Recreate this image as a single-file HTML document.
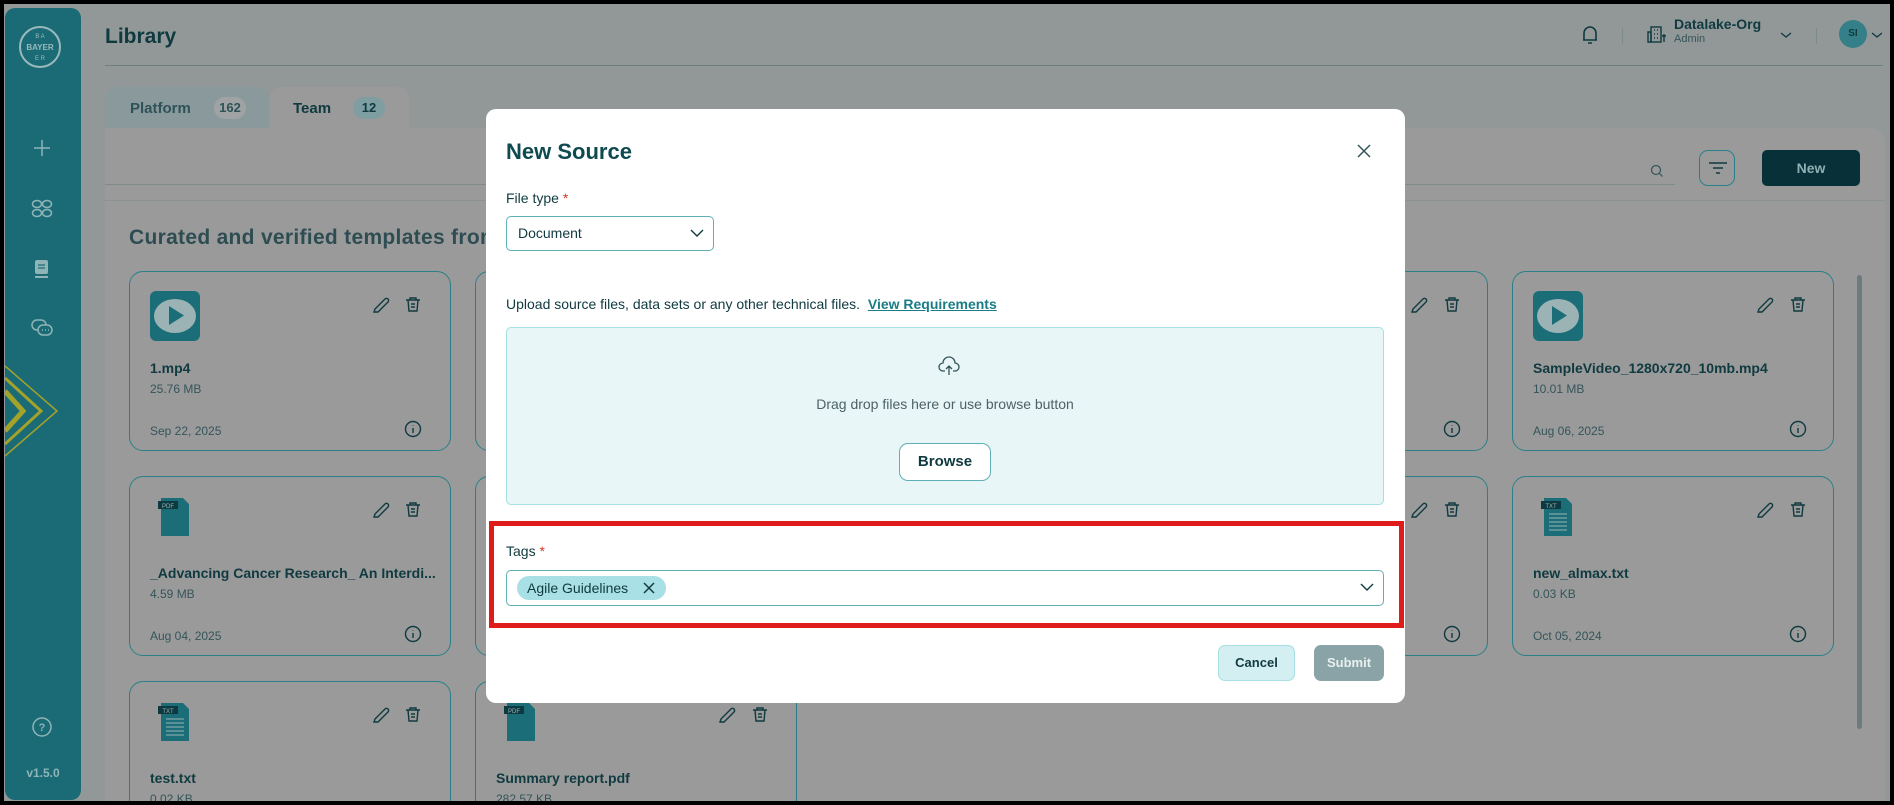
<!DOCTYPE html>
<html><head><meta charset="utf-8">
<style>
*{box-sizing:border-box;margin:0;padding:0}
body{width:1894px;height:805px;overflow:hidden;background:#000;font-family:"Liberation Sans",sans-serif;position:relative}
.scr{position:absolute;left:4px;top:4px;width:1886px;height:797px;background:#929898;overflow:hidden}
.abs{position:absolute}
.side{position:absolute;left:1px;top:4px;width:76px;height:792px;background:#1b6b76;border-radius:10px}
.panel{position:absolute;left:101px;top:124px;width:1780px;height:673px;background:#9a9a9a;border-radius:0 14px 0 0;overflow:hidden}
.card{position:absolute;width:322px;height:180px;border:1.5px solid #2a8088;border-radius:14px}
.nm{position:absolute;left:20px;top:88px;font-size:14px;font-weight:bold;color:#0f3a40;white-space:nowrap}
.sz{position:absolute;left:20px;top:110px;font-size:12px;color:#34555a}
.dt{position:absolute;left:20px;top:152px;font-size:12px;color:#34555a}
.t{color:#0f3a40}
.modal{position:absolute;left:482px;top:105px;width:919px;height:594px;background:#fff;border-radius:10px}
.mc{position:absolute;left:0;top:-4px;width:919px;height:594px}
</style></head><body>
<div class="scr">
<div class="side">
  <svg class="abs" style="left:12px;top:16px" width="46" height="46" viewBox="0 0 46 46"><circle cx="23" cy="23" r="20" fill="none" stroke="#9ab9bc" stroke-width="2"/><text x="23" y="26" font-size="8" fill="#9ab9bc" text-anchor="middle" font-family="Liberation Sans" font-weight="bold">BAYER</text><text x="23" y="14" font-size="6" fill="#9ab9bc" text-anchor="middle" font-family="Liberation Sans">B A</text><text x="23" y="36" font-size="6" fill="#9ab9bc" text-anchor="middle" font-family="Liberation Sans">E R</text></svg>
  <svg class="abs" style="left:27px;top:130px" width="20" height="20"><path d="M10 2v16M2 10h16" stroke="#8fb4b8" stroke-width="1.5"/></svg>
  <svg class="abs" style="left:26px;top:190px" width="22" height="22" fill="none" stroke="#8fb4b8" stroke-width="1.5"><ellipse cx="6" cy="6" rx="4.5" ry="3.5"/><ellipse cx="16" cy="6" rx="4.5" ry="3.5"/><ellipse cx="6" cy="15" rx="4.5" ry="3.5"/><ellipse cx="16" cy="15" rx="4.5" ry="3.5"/></svg>
  <svg class="abs" style="left:27px;top:250px" width="20" height="22"><rect x="3" y="2" width="13" height="14" rx="2" fill="#8fb4b8"/><path d="M6 7h7M6 10h7" stroke="#1b6b76" stroke-width="1.3"/><path d="M3 19h13" stroke="#8fb4b8" stroke-width="2"/></svg>
  <svg class="abs" style="left:25px;top:309px" width="24" height="22" fill="none" stroke="#8fb4b8" stroke-width="1.5"><rect x="2" y="3" width="14" height="10" rx="5"/><rect x="8" y="8" width="14" height="10" rx="5" fill="#1b6b76"/><path d="M12 13h1M15 13h1M18 13h1"/></svg>
  <svg class="abs" style="left:0;top:348px" width="60" height="110" fill="none" stroke="#a3a229"><path d="M0 10 L52 55 L0 100" stroke-width="1.5"/><path d="M0 22 L36 55 L0 88" stroke-width="3"/><path d="M0 35 L18 55 L0 75" stroke-width="5"/></svg>
  <svg class="abs" style="left:26px;top:708px" width="22" height="22" fill="none" stroke="#8fb4b8" stroke-width="1.5"><circle cx="11" cy="11" r="9"/><text x="11" y="15" font-size="11" fill="#8fb4b8" stroke="none" text-anchor="middle" font-family="Liberation Sans" font-weight="bold">?</text></svg>
  <div class="abs" style="left:0;width:76px;top:758px;text-align:center;font-size:12px;font-weight:bold;color:#8fb4b8">v1.5.0</div>
</div>

<div class="abs t" style="left:101px;top:21px;font-size:21px;font-weight:bold">Library</div>
<div class="abs" style="left:101px;top:61px;width:1778px;height:1px;background:#6f7f80"></div>
<svg class="abs" style="left:1576px;top:20px" width="20" height="22" fill="none" stroke="#0f3a40" stroke-width="1.6"><path d="M4 16V9a6 6 0 0 1 12 0v7H3h14M8 19h4"/></svg>
<div class="abs" style="left:1618px;top:24px;width:1px;height:16px;background:#7b8a8b"></div>
<svg class="abs" style="left:1642px;top:20px" width="22" height="20" fill="none" stroke="#0f3a40" stroke-width="1.4"><rect x="5" y="3" width="10" height="15"/><path d="M2 8h3v10H2zM8 6h1M11 6h1M8 10h1M11 10h1M8 14h1M11 14h1M18 10v8M16 12h4"/></svg>
<div class="abs t" style="left:1670px;top:12px;font-size:14px;font-weight:bold">Datalake-Org</div>
<div class="abs" style="left:1670px;top:29px;font-size:11px;color:#34555a">Admin</div>
<svg class="abs" style="left:1775px;top:26px" width="14" height="10"><path d="M2 3l5 4 5-4" stroke="#0f3a40" fill="none" stroke-width="1.3"/></svg>
<div class="abs" style="left:1812px;top:24px;width:1px;height:16px;background:#7b8a8b"></div>
<div class="abs" style="left:1835px;top:16px;width:28px;height:28px;border-radius:50%;background:#357f88;color:#0f3a40;font-size:10px;font-weight:bold;text-align:center;line-height:28px">SI</div>
<svg class="abs" style="left:1866px;top:26px" width="14" height="10"><path d="M2 3l5 4 5-4" stroke="#0f3a40" fill="none" stroke-width="1.3"/></svg>

<div class="abs" style="left:101px;top:83px;width:164px;height:42px;background:#8a9a9c;border-radius:12px 12px 0 0"></div>
<div class="abs" style="left:265px;top:83px;width:140px;height:42px;background:#9a9a9a;border-radius:12px 12px 0 0"></div>
<div class="abs" style="left:126px;top:96px;font-size:15px;font-weight:bold;color:#2e5258">Platform</div>
<div class="abs" style="left:210px;top:93px;width:32px;height:22px;border-radius:11px;background:#a0a3a4;font-size:13px;font-weight:bold;color:#2e5258;text-align:center;line-height:22px">162</div>
<div class="abs t" style="left:289px;top:96px;font-size:15px;font-weight:bold">Team</div>
<div class="abs" style="left:349px;top:93px;width:32px;height:22px;border-radius:11px;background:#7e9ea1;font-size:13px;font-weight:bold;color:#0f3a40;text-align:center;line-height:22px">12</div>

<div class="panel">
  <div class="abs" style="left:0;top:56px;width:1570px;height:1px;background:#7f8a8b"></div>
  <svg class="abs" style="left:1545px;top:36px" width="14" height="14" fill="none" stroke="#34555a" stroke-width="1.2"><circle cx="6" cy="6" r="4.5"/><path d="M9.5 9.5l3 3"/></svg>
  <div class="abs" style="left:1594px;top:22px;width:36px;height:36px;border:1.5px solid #2a8088;border-radius:9px"></div>
  <svg class="abs" style="left:1602px;top:32px" width="22" height="16" stroke="#0f3a40" stroke-width="1.4"><path d="M2 3h18M6 8h10M9 13h4"/></svg>
  <div class="abs" style="left:1657px;top:22px;width:98px;height:36px;background:#083038;border-radius:5px;color:#8fb0b3;font-size:14px;font-weight:bold;text-align:center;line-height:36px">New</div>
  <div class="abs" style="left:0;top:72px;width:1780px;height:1px;background:#8a9293"></div>
  <div class="abs" style="left:24px;top:98px;font-size:21px;font-weight:bold;color:#2e4d52;letter-spacing:.3px">Curated and verified templates from</div>
  <div class="abs" style="left:1752px;top:147px;width:5px;height:454px;background:#6b7b7e;border-radius:3px"></div>

  <div class="card" style="left:24px;top:143px">
    <svg class="abs" style="left:20px;top:19px" width="50" height="50"><rect width="50" height="50" rx="6" fill="#1b6e78"/><ellipse cx="25" cy="25" rx="21" ry="17" fill="#9bb3b5"/><path d="M19 15v19l15-9.5z" fill="#1b6e78"/></svg>
    <div class="nm">1.mp4</div><div class="sz">25.76 MB</div><div class="dt">Sep 22, 2025</div>
  </div>
  <div class="card" style="left:370px;top:143px"></div>
  <div class="card" style="left:1061px;top:143px"></div>
  <div class="card" style="left:1407px;top:143px">
    <svg class="abs" style="left:20px;top:19px" width="50" height="50"><rect width="50" height="50" rx="6" fill="#1b6e78"/><ellipse cx="25" cy="25" rx="21" ry="17" fill="#9bb3b5"/><path d="M19 15v19l15-9.5z" fill="#1b6e78"/></svg>
    <div class="nm">SampleVideo_1280x720_10mb.mp4</div><div class="sz">10.01 MB</div><div class="dt">Aug 06, 2025</div>
  </div>
  <div class="card" style="left:24px;top:348px">
    <svg class="abs" style="left:28px;top:19px" width="34" height="42"><path d="M3 2h22l6 6v32H3z" fill="#1b6e78"/><rect x="0" y="5" width="20" height="8" fill="#0d3a40"/><text x="10" y="12" font-size="6" fill="#9bb3b5" text-anchor="middle" font-family="Liberation Sans">PDF</text></svg>
    <div class="nm">_Advancing Cancer Research_ An Interdi...</div><div class="sz">4.59 MB</div><div class="dt">Aug 04, 2025</div>
  </div>
  <div class="card" style="left:370px;top:348px"></div>
  <div class="card" style="left:1061px;top:348px"></div>
  <div class="card" style="left:1407px;top:348px">
    <svg class="abs" style="left:28px;top:19px" width="34" height="42"><path d="M3 2h22l6 6v32H3z" fill="#1b6e78"/><rect x="0" y="5" width="20" height="8" fill="#0d3a40"/><text x="10" y="12" font-size="6" fill="#9bb3b5" text-anchor="middle" font-family="Liberation Sans">TXT</text><path d="M8 18h18M8 22h18M8 26h18M8 30h18M8 34h18" stroke="#9bb3b5" stroke-width="1"/></svg>
    <div class="nm">new_almax.txt</div><div class="sz">0.03 KB</div><div class="dt">Oct 05, 2024</div>
  </div>
  <div class="card" style="left:24px;top:553px">
    <svg class="abs" style="left:28px;top:19px" width="34" height="42"><path d="M3 2h22l6 6v32H3z" fill="#1b6e78"/><rect x="0" y="5" width="20" height="8" fill="#0d3a40"/><text x="10" y="12" font-size="6" fill="#9bb3b5" text-anchor="middle" font-family="Liberation Sans">TXT</text><path d="M8 18h18M8 22h18M8 26h18M8 30h18M8 34h18" stroke="#9bb3b5" stroke-width="1"/></svg>
    <div class="nm">test.txt</div><div class="sz">0.02 KB</div>
  </div>
  <div class="card" style="left:370px;top:553px">
    <svg class="abs" style="left:28px;top:19px" width="34" height="42"><path d="M3 2h22l6 6v32H3z" fill="#1b6e78"/><rect x="0" y="5" width="20" height="8" fill="#0d3a40"/><text x="10" y="12" font-size="6" fill="#9bb3b5" text-anchor="middle" font-family="Liberation Sans">PDF</text></svg>
    <div class="nm">Summary report.pdf</div><div class="sz">282.57 KB</div>
  </div>
</div>

<svg class="abs" style="left:0;top:0" width="1886" height="797">
  <defs>
    <g id="ed"><path d="M-6 5 L4 -5 a2 2 0 0 1 3 3 L-3 8 L-7 8 Z" fill="none" stroke="#0f3a40" stroke-width="1.4"/></g>
    <g id="tr" fill="none" stroke="#0f3a40" stroke-width="1.4"><path d="M-7 -4h14M-3 -4v-2h6v2M-5 -4l1 11h8l1-11M-2 0h4M-2 3h4"/></g>
    <g id="inf" fill="none" stroke="#0f3a40" stroke-width="1.4"><circle r="7.5"/><path d="M0 -1v5M0 -4v.5"/></g>
  </defs>
  <use href="#ed" x="377" y="300"/><use href="#tr" x="409" y="300"/><use href="#inf" x="409" y="425"/>
  <use href="#ed" x="1415" y="300"/><use href="#tr" x="1448" y="300"/><use href="#inf" x="1448" y="425"/>
  <use href="#ed" x="1761" y="300"/><use href="#tr" x="1794" y="300"/><use href="#inf" x="1794" y="425"/>
  <use href="#ed" x="377" y="505"/><use href="#tr" x="409" y="505"/><use href="#inf" x="409" y="630"/>
  <use href="#ed" x="1415" y="505"/><use href="#tr" x="1448" y="505"/><use href="#inf" x="1448" y="630"/>
  <use href="#ed" x="1761" y="505"/><use href="#tr" x="1794" y="505"/><use href="#inf" x="1794" y="630"/>
  <use href="#ed" x="377" y="710"/><use href="#tr" x="409" y="710"/>
  <use href="#ed" x="723" y="710"/><use href="#tr" x="756" y="710"/>
</svg>

<div class="modal"><div class="mc">
  <div class="abs" style="left:20px;top:34px;font-size:22px;font-weight:bold;color:#0f4a50">New Source</div>
  <svg class="abs" style="left:870px;top:38px" width="16" height="16"><path d="M2 2l12 12M14 2L2 14" stroke="#34555a" stroke-width="1.5"/></svg>
  <div class="abs t" style="left:20px;top:85px;font-size:14px">File type <span style="color:#d03a2a">*</span></div>
  <div class="abs" style="left:20px;top:111px;width:208px;height:35px;border:1.5px solid #5fb0b5;border-radius:5px"></div>
  <div class="abs t" style="left:32px;top:120px;font-size:14px">Document</div>
  <svg class="abs" style="left:203px;top:122px" width="16" height="12"><path d="M2 3l6 6 6-6" stroke="#0f3a40" fill="none" stroke-width="1.4"/></svg>
  <div class="abs t" style="left:20px;top:191px;font-size:14px">Upload source files, data sets or any other technical files.&nbsp; <span style="color:#1a7d85;text-decoration:underline;font-weight:bold">View Requirements</span></div>
  <div class="abs" style="left:20px;top:222px;width:878px;height:178px;background:#e8f6f7;border:1.5px solid #a7dfe3;border-radius:5px"></div>
  <svg class="abs" style="left:452px;top:250px" width="22" height="22" fill="none" stroke="#34555a" stroke-width="1.3"><path d="M7 16H5a4 4 0 0 1 0-8 6 6 0 0 1 12 0 4 4 0 0 1 0 8h-2M11 20v-9M8 14l3-3 3 3"/></svg>
  <div class="abs" style="left:20px;width:878px;top:291px;text-align:center;font-size:14px;color:#4d6266">Drag drop files here or use browse button</div>
  <div class="abs" style="left:413px;top:338px;width:92px;height:38px;border:1.5px solid #5fb0b5;border-radius:9px;background:#fff;text-align:center;line-height:35px;font-size:15px;font-weight:bold;color:#0f3a40">Browse</div>
  <div class="abs" style="left:3px;top:416px;width:915px;height:107px;border:5px solid #e01b1b"></div>
  <div class="abs t" style="left:20px;top:438px;font-size:14px">Tags <span style="color:#d03a2a">*</span></div>
  <div class="abs" style="left:20px;top:465px;width:878px;height:36px;border:1.5px solid #5fb0b5;border-radius:5px"></div>
  <div class="abs" style="left:31px;top:471px;width:149px;height:24px;border-radius:12px;background:#a8e0e6;font-size:14px;color:#0f3a40;line-height:24px;padding-left:10px">Agile Guidelines</div>
  <svg class="abs" style="left:156px;top:476px" width="14" height="14"><path d="M2 2l10 10M12 2L2 12" stroke="#0f3a40" stroke-width="1.5"/></svg>
  <svg class="abs" style="left:873px;top:476px" width="16" height="12"><path d="M2 3l6 6 6-6" stroke="#0f3a40" fill="none" stroke-width="1.4"/></svg>
  <div class="abs" style="left:732px;top:540px;width:77px;height:36px;background:#d3eff2;border:1px solid #a7dfe3;border-radius:7px;text-align:center;line-height:34px;font-size:13px;font-weight:bold;color:#0f3a40">Cancel</div>
  <div class="abs" style="left:828px;top:540px;width:70px;height:36px;background:#8aa3a6;border-radius:7px;text-align:center;line-height:36px;font-size:13px;font-weight:bold;color:#e8f0f0">Submit</div>
</div></div>
</div>
</body></html>
